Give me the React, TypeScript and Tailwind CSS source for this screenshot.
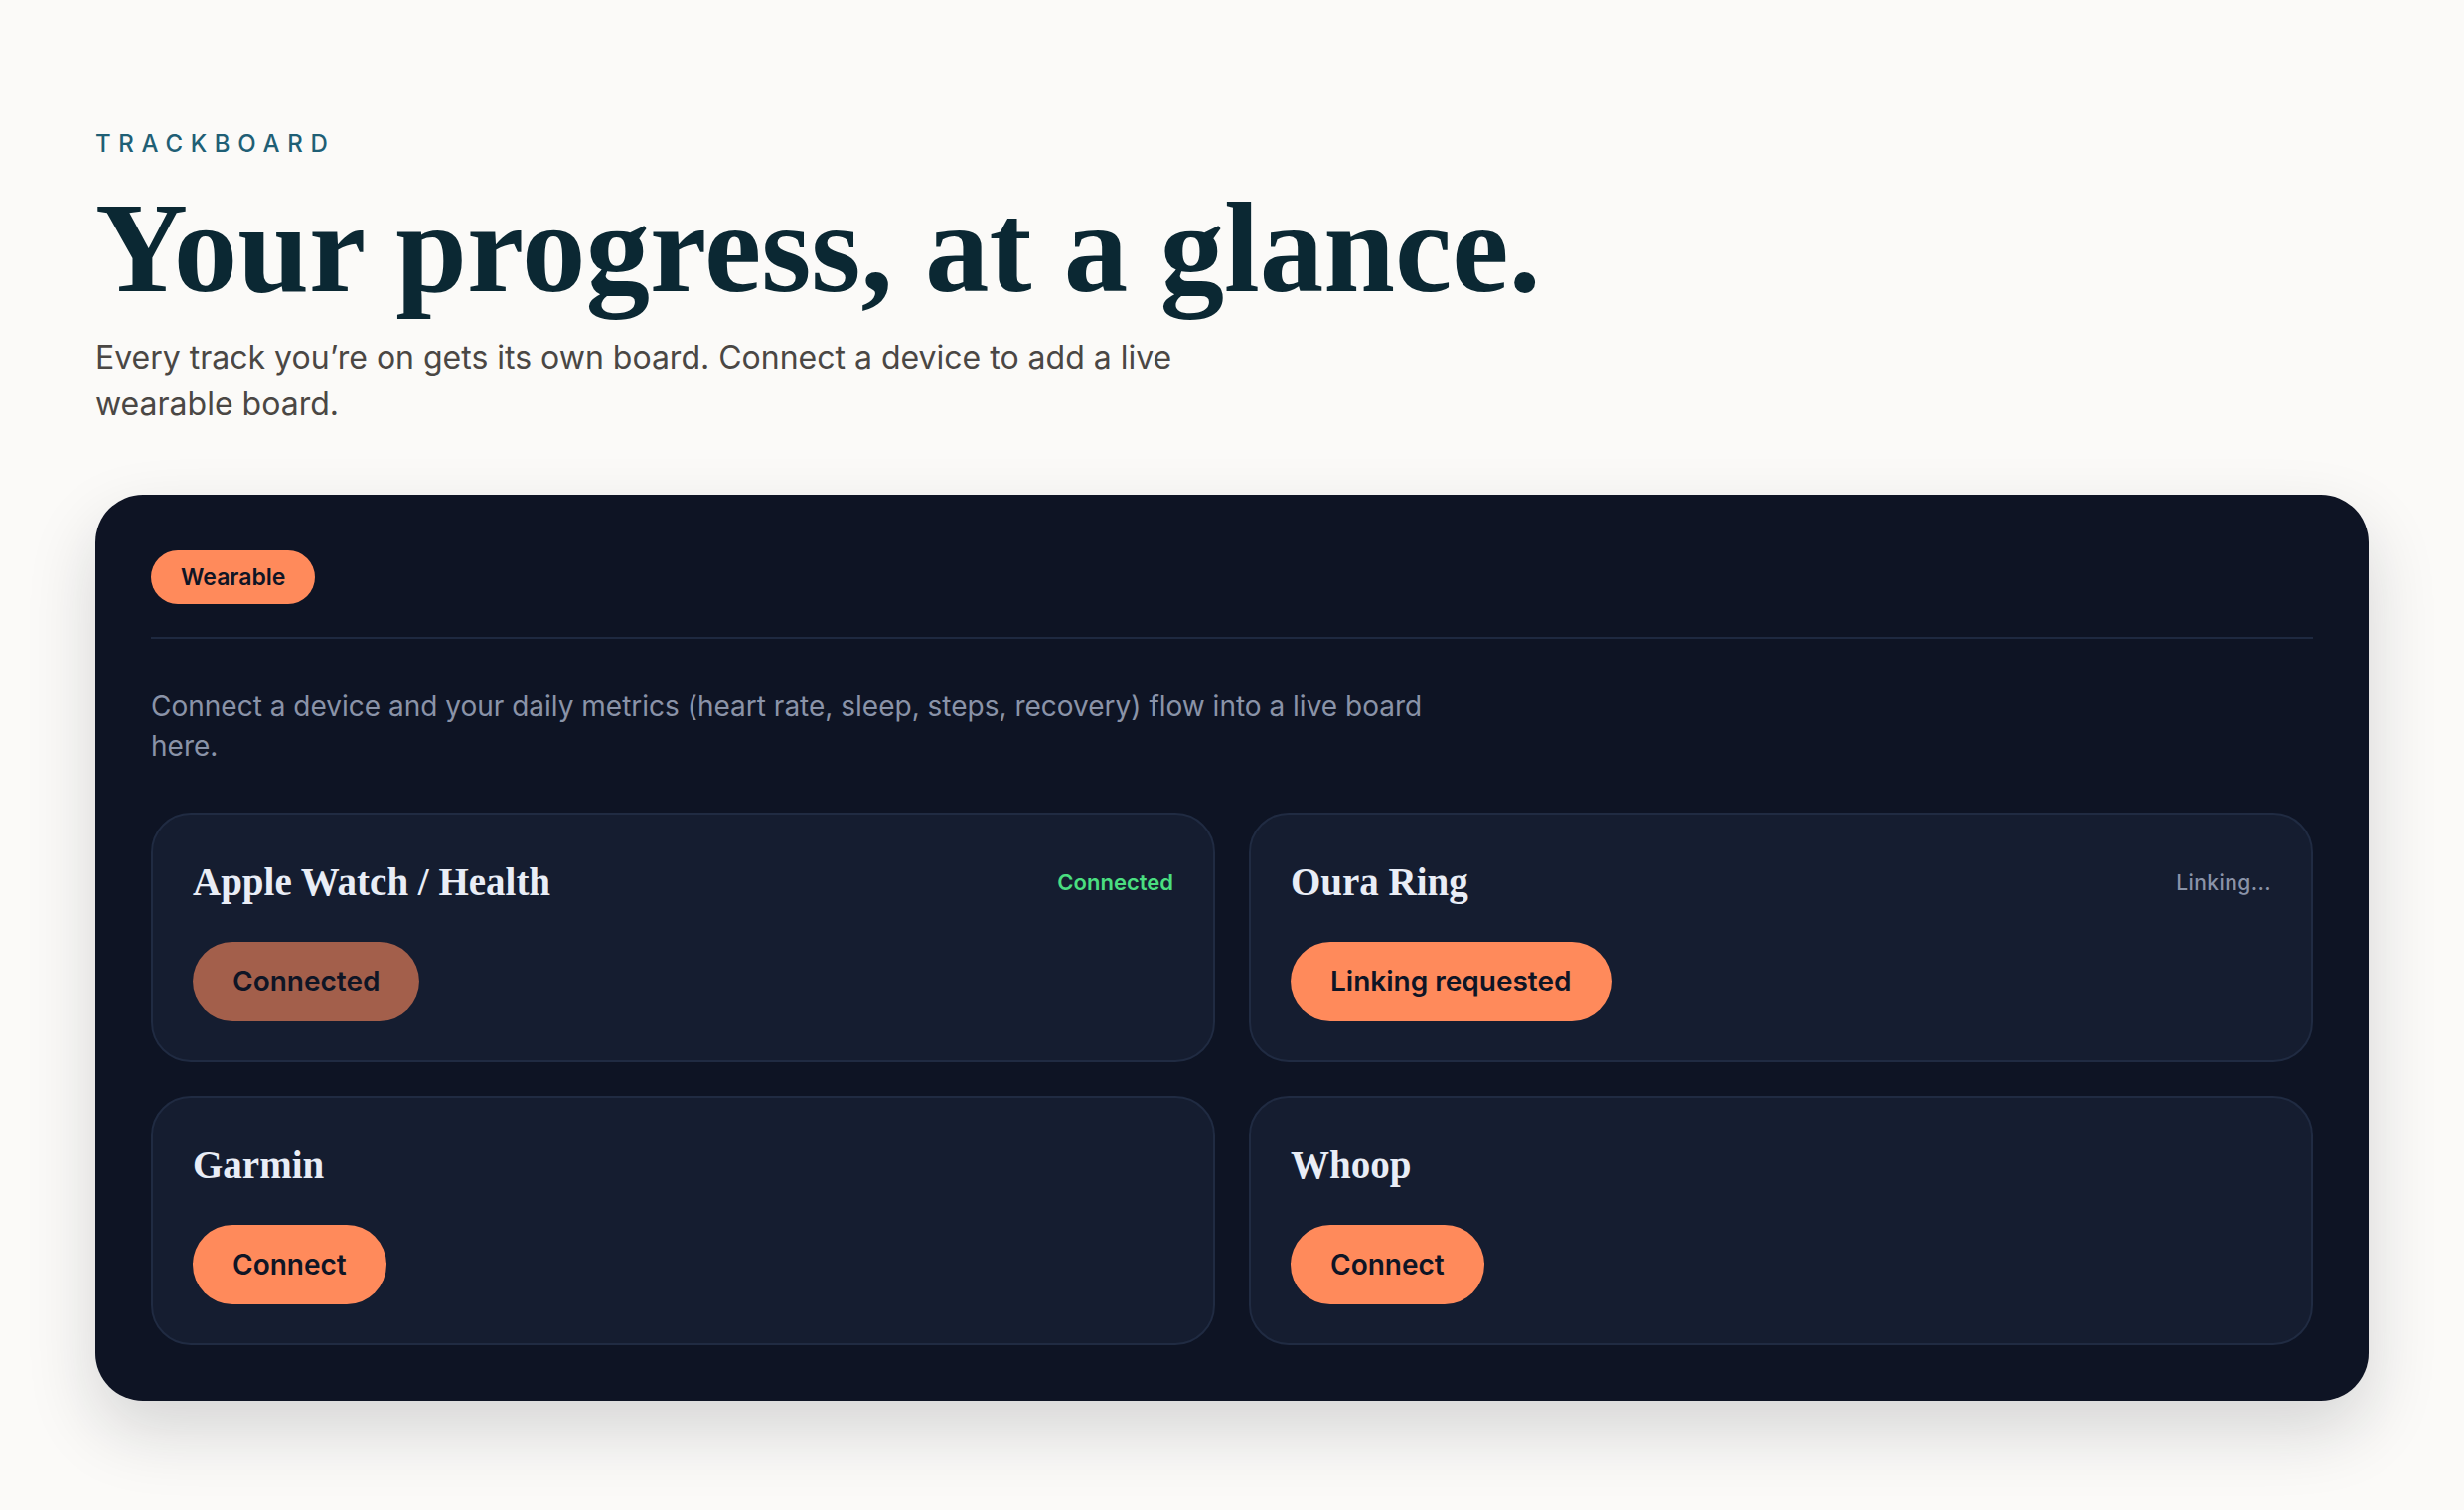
const DEVICES = [
  { name: "Apple Watch / Health", status: "Connected", statusTone: "ok", action: "Connected", actionTone: "muted" },
  { name: "Oura Ring", status: "Linking...", statusTone: "pending", action: "Linking requested", actionTone: "primary" },
  { name: "Garmin", status: "", statusTone: "", action: "Connect", actionTone: "primary" },
  { name: "Whoop", status: "", statusTone: "", action: "Connect", actionTone: "primary" },
];

const sans = "font-['Inter','Liberation_Sans',sans-serif]";
const serif = "font-['Liberation_Serif','DejaVu_Serif',serif]";

export default function App() {
  return (
    <main className={`min-h-screen w-full bg-[#fbfaf8] px-24 pt-[127px] pb-24 ${sans}`}>
      <p className="text-[24px] font-medium uppercase tracking-[0.32em] text-[#1f5f75]">Trackboard</p>
      <h1 className={`mt-[19px] text-[129px] font-bold leading-[1.05] text-[#0b2833] ${serif}`}>
        Your progress, at a glance.
      </h1>
      <p className="mt-[19px] max-w-[1110px] text-[32px] leading-[47px] text-[#4a4744]">
        Every track you’re on gets its own board. Connect a device to add a live wearable board.
      </p>

      <section className="mt-[68px] rounded-[48px] bg-[#0e1424] p-14 shadow-[0_30px_70px_rgba(20,24,36,0.16)]">
        <span className="inline-flex h-[54px] items-center rounded-full bg-[#ff8a5b] px-[30px] text-[23px] font-semibold text-[#0f1525]">
          Wearable
        </span>
        <div className="mt-[33px] h-[2px] w-full bg-[#1e2940]" />
        <p className="mt-[48px] max-w-[1320px] text-[28px] leading-[40px] text-[#8a93a8]">
          Connect a device and your daily metrics (heart rate, sleep, steps, recovery) flow into a live board here.
        </p>

        <div className="mt-[47px] grid grid-cols-2 gap-[34px]">
          {DEVICES.map((d) => (
            <div
              key={d.name}
              className="flex flex-col rounded-[40px] border-2 border-[#202b42] bg-[#151d30] px-10 pt-[38px] pb-[39px]"
            >
              <div className="flex h-[60px] items-center justify-between">
                <h3 className={`text-[39px] font-bold text-[#e9edf6] ${serif}`}>{d.name}</h3>
                {d.status && (
                  <span
                    className={
                      d.statusTone === "ok"
                        ? "text-[22px] font-semibold text-[#4ade80]"
                        : "text-[21px] font-medium tracking-[0.02em] text-[#8a93a8]"
                    }
                  >
                    {d.status}
                  </span>
                )}
              </div>
              <div className="mt-[30px]">
                <button
                  className={
                    d.actionTone === "muted"
                      ? "h-20 rounded-full bg-[#a35f4b] px-10 text-[28px] font-semibold text-[#0f1525]"
                      : "h-20 rounded-full bg-[#ff8a5b] px-10 text-[28px] font-semibold text-[#0f1525]"
                  }
                >
                  {d.action}
                </button>
              </div>
            </div>
          ))}
        </div>
      </section>
    </main>
  );
}
